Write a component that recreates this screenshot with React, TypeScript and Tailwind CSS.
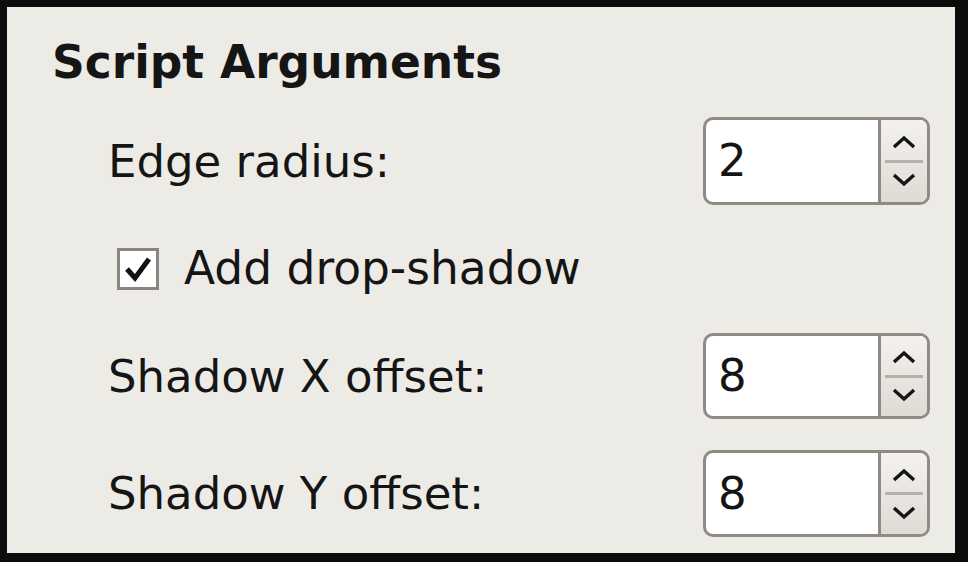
const font = { fontFamily: '"DejaVu Sans", "Liberation Sans", sans-serif' };

const rows = [
  { label: "Edge radius:", value: "2" },
  { label: "Shadow X offset:", value: "8" },
  { label: "Shadow Y offset:", value: "8" },
];

const Chevron = ({ up }: { up?: boolean }) => (
  <svg width="24" height="14" viewBox="0 0 24 14" className="block">
    <polyline
      points={up ? "2,12 12,3 22,12" : "2,2 12,11 22,2"}
      fill="none"
      stroke="#151515"
      strokeWidth="3.5"
    />
  </svg>
);

const SpinButton = ({ value, height }: { value: string; height: string }) => (
  <div className={`flex w-[227px] ${height} rounded-[10px] border-[3px] border-[#8f8b84] bg-white overflow-hidden`}>
    <div className="flex-1 flex items-center pl-[12px] text-[45px] text-[#151515]">{value}</div>
    <div className="w-[49px] flex flex-col border-l-[3px] border-[#8f8b84] bg-gradient-to-b from-[#f4f2ef] to-[#dedad4]">
      <div className="flex-1 flex items-center justify-center pt-[4px]">
        <Chevron up />
      </div>
      <div className="mx-[4px] h-[3px] bg-[#b6b1aa]" />
      <div className="flex-1 flex items-center justify-center pb-[4px]">
        <Chevron />
      </div>
    </div>
  </div>
);

const SpinRow = ({ label, value, height, className }: { label: string; value: string; height: string; className: string }) => (
  <div className={`flex items-center justify-between pl-[56px] ${className}`}>
    <span className="text-[45px] text-[#151515] leading-none">{label}</span>
    <SpinButton value={value} height={height} />
  </div>
);

export default function App() {
  return (
    <div className="w-[968px] h-[562px] bg-[#0c0c0c] pt-[7px] pl-[7px] pr-[13px] pb-[9px]" style={font}>
      <div className="h-full bg-[#edebe6] pl-[45px] pr-[25px] pt-[30px]">
        <div className="h-[52px] flex items-center text-[45.5px] font-bold text-[#151515] leading-none">Script Arguments</div>

        <SpinRow label={rows[0].label} value={rows[0].value} height="h-[88px]" className="mt-[28px]" />

        <div className="flex items-center gap-[25px] pl-[65px] mt-[43px] h-[42px]">
          <div className="w-[42px] h-[42px] border-[3px] border-[#8a867f] bg-white flex items-center justify-center">
            <svg width="30" height="28" viewBox="0 0 30 28">
              <polyline points="4,14 12,23 26,4" fill="none" stroke="#111" strokeWidth="5" />
            </svg>
          </div>
          <span className="text-[45.5px] text-[#151515] leading-none">Add drop-shadow</span>
        </div>

        <SpinRow label={rows[1].label} value={rows[1].value} height="h-[86px]" className="mt-[43px]" />
        <SpinRow label={rows[2].label} value={rows[2].value} height="h-[87px]" className="mt-[31px]" />
      </div>
    </div>
  );
}
